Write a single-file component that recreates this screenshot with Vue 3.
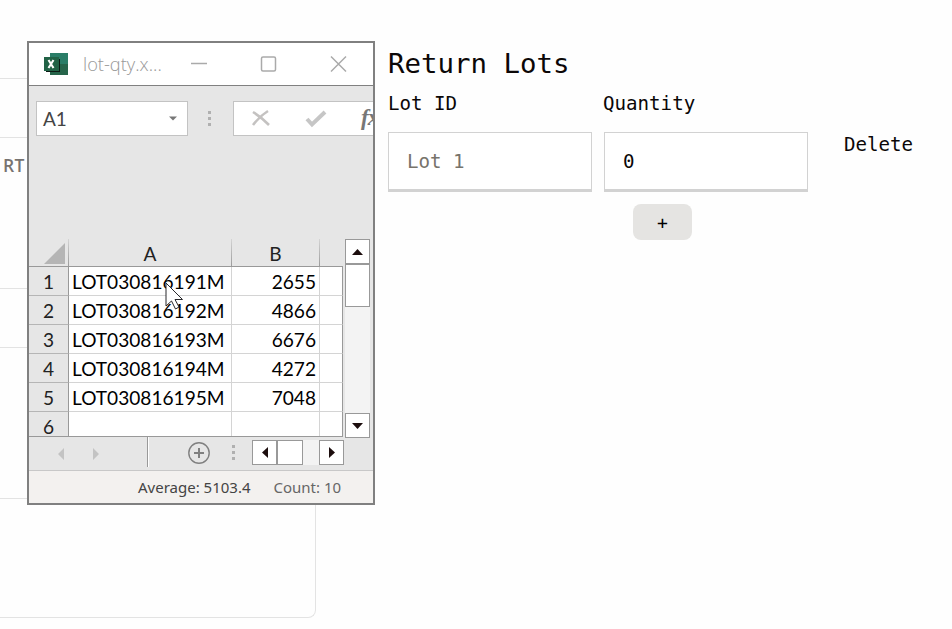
<script setup>
const rows = [
  { n: 1, lot: 'LOT030816191M', qty: 2655 },
  { n: 2, lot: 'LOT030816192M', qty: 4866 },
  { n: 3, lot: 'LOT030816193M', qty: 6676 },
  { n: 4, lot: 'LOT030816194M', qty: 4272 },
  { n: 5, lot: 'LOT030816195M', qty: 7048 },
  { n: 6, lot: '', qty: '' },
]
</script>

<template>
  <div class="page">
    <aside class="records">
      <div class="rec top"></div>
      <div class="rec short"></div>
      <div class="rec tall"><span>RT</span></div>
      <div class="rec short"></div>
      <div class="rec tall"></div>
      <div class="rec last"></div>
    </aside>

    <main class="form">
      <h1>Return Lots</h1>
      <div class="labels"><label>Lot ID</label><label>Quantity</label></div>
      <div class="line">
        <input class="field" placeholder="Lot 1" />
        <input class="field" value="0" />
        <span class="delete">Delete</span>
      </div>
      <button class="add">+</button>
    </main>

    <section class="window">
      <header class="titlebar">
        <svg class="logo" width="24" height="22" viewBox="0 0 24 22">
          <path fill="#2a7d67" d="M6 0h18v11H6z" />
          <path fill="#26644a" d="M6 11h18v11H6z" />
          <path fill="#0b1a14" d="M2 6h14v13H2z" />
          <path fill="#216246" d="M0 4h15v14H0z" />
          <path d="M4.500 7l5 8M9.500 7l-5 8" stroke="#fff" stroke-width="2.100" />
        </svg>
        <span class="filename">lot-qty.x...</span>
        <svg class="controls" width="160" height="20" viewBox="0 0 160 20" fill="none" stroke="#aaa" stroke-width="1.500">
          <path d="M1 9.500h16" />
          <rect x="71.500" y="3" width="14" height="14" rx="1.500" />
          <path d="M141 2.500l15 15M156 2.500l-15 15" />
        </svg>
      </header>

      <div class="formula">
        <div class="namebox">
          <span>A1</span>
          <svg width="8" height="5" viewBox="0 0 8 5"><path d="M0 .5h8L4 4.500z" fill="#777" /></svg>
        </div>
        <div class="dots"><i></i><i></i><i></i></div>
        <div class="fx">
          <svg width="140" height="33" viewBox="0 0 140 33" fill="none">
            <path d="M19 10q8 5 16 13M34 9q-8 5-15 14" stroke="#c4c2c1" stroke-width="2.600" />
            <path d="M73 17l5 5.500L91 10" stroke="#c6c6c6" stroke-width="4" />
          </svg>
          <em>fx</em>
        </div>
      </div>

      <div class="sheet">
        <div class="cells">
          <div class="row head">
            <div class="corner"><svg width="21" height="21" viewBox="0 0 21 21"><path d="M21 0v21H0z" fill="#b5b5b5" /></svg></div>
            <div class="col">A</div>
            <div class="col">B</div>
            <div></div>
          </div>
          <div v-for="r in rows" :key="r.n" class="row data">
            <div class="num">{{ r.n }}</div>
            <div class="lot">{{ r.lot }}</div>
            <div class="qty">{{ r.qty }}</div>
            <div class="rest"></div>
          </div>
        </div>
        <div class="vscroll">
          <div class="btn"><svg width="11" height="6" viewBox="0 0 11 6"><path d="M0 6L5.500 0 11 6z" fill="#1c0d0d" /></svg></div>
          <div class="vthumb"></div>
          <div class="btn end"><svg width="11" height="6" viewBox="0 0 11 6"><path d="M0 0h11L5.500 6z" fill="#1c0d0d" /></svg></div>
        </div>
      </div>

      <div class="tabs">
        <div class="arrows">
          <svg width="42" height="12" viewBox="0 0 42 12"><path d="M6 0v12L0 6zM35 0v12l6-6z" fill="#c3c3c3" /></svg>
        </div>
        <svg class="plus" width="22" height="22" viewBox="0 0 22 22" fill="none" stroke="#808080">
          <circle cx="11" cy="11" r="10.200" stroke-width="1.400" />
          <path d="M6 11h10M11 6v10" stroke-width="2" />
        </svg>
        <div class="dots tabdots"><i></i><i></i><i></i></div>
        <div class="hscroll">
          <div class="btn"><svg width="6" height="11" viewBox="0 0 6 11"><path d="M6 0v11L0 5.500z" fill="#1c0d0d" /></svg></div>
          <div class="btn hthumb"></div>
          <div class="btn end"><svg width="6" height="11" viewBox="0 0 6 11"><path d="M0 0v11l6-5.500z" fill="#1c0d0d" /></svg></div>
        </div>
      </div>

      <footer class="status"><span>Average: 5103.4</span><span class="count">Count: 10</span></footer>

      <svg class="cursor" width="19" height="28" viewBox="0 0 19 28">
        <path d="M1 1v23l5.500-5 4 8 3.500-2-4-7.500h7.500z" fill="#fff" stroke="#28282c" stroke-width="1" />
      </svg>
    </section>
  </div>
</template>

<style>
body { background: #fefefe; }
</style>

<style scoped>
* { box-sizing: border-box; }
.page { position: relative; display: flex; width: 952px; height: 629px; overflow: hidden; background: #fefefe; }
.records { width: 316px; height: 618px; flex: none; }
.rec { border-bottom: 1px solid #e3e3e3; }
.top { height: 79px; }
.short { height: 59px; }
.tall { height: 151px; padding: 15px 0 0 3px; font: 600 17.500px/25px "Open Sans", sans-serif; color: #777370; letter-spacing: .3px; }
.last { height: 119px; border-right: 1px solid #e3e3e3; border-radius: 0 0 8px 0; }

.form { margin-left: 72px; padding-top: 44px; font-family: "DejaVu Sans Mono", monospace; color: #0b0707; font-size: 19.150px; }
h1 { margin: 0; font-size: 27.400px; line-height: 40px; font-weight: 400; }
.labels { display: flex; height: 48px; padding-top: 8px; line-height: 24px; }
.labels label { width: 215px; }
.line { display: flex; gap: 12px; }
.field { width: 204px; height: 60px; border: 1px solid #d2d2d2; border-bottom-width: 3px; border-radius: 0; background: #fff; padding: 0 18px; font: inherit; color: inherit; outline: 0; }
.field::placeholder { color: #77736b; opacity: 1; }
.delete { margin-left: 24px; line-height: 26px; }
.add { display: block; margin: 12px 0 0 245px; width: 59px; height: 36px; padding: 0; border: 0; border-radius: 8px; background: #e5e4e2; font: inherit; font-size: 18px; color: #000; }

.window { position: absolute; left: 27px; top: 41px; width: 348px; height: 464px; border: 2px solid #808080; background: #e6e6e6; overflow: hidden; display: flex; flex-direction: column; }
.titlebar { display: flex; align-items: center; height: 43px; flex: none; padding-left: 15px; background: #fff; border-bottom: 1px solid #808080; }
.filename { margin-left: 15px; width: 107px; font: 300 18.300px/24px "Open Sans", sans-serif; color: #999; }
.controls { flex: none; }
.formula { display: flex; align-items: center; padding: 15px 0 0 7px; height: 50px; flex: none; }
.namebox { display: flex; flex: none; align-items: center; justify-content: space-between; width: 152px; height: 35px; border: 1px solid #c3c3c3; background: #fff; padding: 0 10px 0 6px; font: 19px "Lato", sans-serif; color: #444; }
.dots { display: flex; flex: none; flex-direction: column; gap: 3px; margin-left: 20px; }
.dots i { width: 3px; height: 3px; background: #b0b0b0; }
.fx { display: flex; width: 170px; height: 35px; flex: none; margin-left: 22px; border: 1px solid #c3c3c3; background: #fff; }
.fx svg { flex: none; }
.fx em { margin-left: -13px; font: italic 700 23px/31px "Liberation Serif", serif; color: #777; letter-spacing: -1px; }

.sheet { display: flex; height: 301px; padding-top: 103px; flex: none; }
.cells { width: 314px; height: 198px; overflow: hidden; border-bottom: 1px solid #999; font: 19.100px/28px "Lato", sans-serif; color: #000; flex: none; }
.row { display: grid; grid-template: 29px / 40px 163px 88px 23px; height: 29px; }
.head { height: 28px; grid-template-rows: 27px; border-bottom: 1px solid #999; line-height: 29px; text-align: center; color: #222; }
.head > div:not(:last-child) { border-right: 1px solid; border-image: linear-gradient(#d6d6d6, #999) 1; }
.corner { padding: 4px 3px 0 0; display: flex; justify-content: flex-end; }
.data > div { border-right: 1px solid #d4d4d4; border-bottom: 1px solid #d4d4d4; background: #fff; line-height: 29px; }
.data .num { background: #e6e6e6; border-right-color: #999; border-bottom-color: #b5b5b5; text-align: center; color: #222; }
.data .rest { border-right-color: #999; }
.lot { padding-left: 3px; white-space: nowrap; }
.qty { text-align: right; padding-right: 3px; }
.vscroll { display: flex; flex-direction: column; width: 25px; height: 199px; margin-left: 2px; background: #f3f3f3; flex: none; }
.btn { display: flex; align-items: center; justify-content: center; width: 25px; height: 25px; border: 1px solid #999; background: #fff; flex: none; }
.vthumb { height: 43px; border: 1px solid #999; background: #fff; }
.vscroll .end { margin-top: auto; }

.tabs { display: flex; align-items: center; height: 34px; padding-bottom: 2px; border-bottom: 1px solid #c8c8c8; flex: none; }
.arrows { width: 120px; height: 30px; padding: 9px 0 0 29px; border-right: 1px solid #fff; box-shadow: inset -1px 0 #999; align-self: flex-start; }
.plus { margin-left: 39px; flex: none; }
.tabdots { margin-left: 22px; }
.hscroll { display: flex; width: 92px; margin-left: 17px; background: #f3f3f3; }
.hthumb { width: 26px; }
.hscroll .end { margin-left: auto; }
.status { flex: 1; display: flex; padding-left: 109px; background: #f3f1ef; font: 15px/33px "Noto Sans", sans-serif; color: #444; white-space: nowrap; }
.count { margin-left: 23px; color: #666; }
.cursor { position: absolute; left: 136px; top: 239px; }
</style>
